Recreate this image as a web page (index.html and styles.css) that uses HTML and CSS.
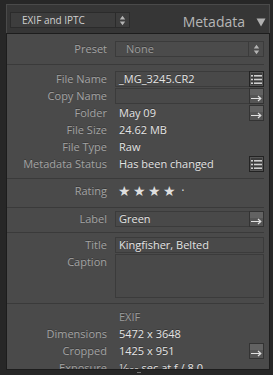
FILE: index.html
```html
<!DOCTYPE html>
<html>
<head>
<meta charset="utf-8">
<link rel="stylesheet" href="styles.css">
</head>
<body>
<div class="frame">
  <div class="head">
    <div class="select">
      <span class="select-text">EXIF and IPTC</span>
      <span class="stepper"><svg width="7" height="11" viewBox="0 0 7 11"><path d="M3.5 0.8 L6.2 4.6 L0.8 4.6 Z M0.8 6.4 L6.2 6.4 L3.5 10.2 Z" fill="#b4b4b4"/></svg></span>
    </div>
    <div class="title">Metadata</div>
    <svg class="tri" width="10" height="9" viewBox="0 0 10 9"><path d="M0.5 0.5 L9.5 0.5 L5 8.5 Z" fill="#b0b0b0"/></svg>
  </div>
  <div class="panel">
    <div class="sec sec-preset">
      <div class="row"><span class="lbl">Preset</span>
        <div class="field dd"><span class="val dim">None</span><span class="stepper2"><svg width="7" height="11" viewBox="0 0 7 11"><path d="M3.5 0.8 L6.2 4.6 L0.8 4.6 Z M0.8 6.4 L6.2 6.4 L3.5 10.2 Z" fill="#b4b4b4"/></svg></span></div>
      </div>
    </div>
    <div class="sec sec-file">
      <div class="row"><span class="lbl">File Name</span>
        <div class="field"><span class="val">_MG_3245.CR2</span><span class="btn btn-list"><svg width="11" height="9" viewBox="0 0 11 9"><g fill="#d0d0d0"><rect x="0" y="0" width="2" height="1.6"/><rect x="3" y="0" width="8" height="1.6"/><rect x="0" y="3.7" width="2" height="1.6"/><rect x="3" y="3.7" width="8" height="1.6"/><rect x="0" y="7.4" width="2" height="1.6"/><rect x="3" y="7.4" width="8" height="1.6"/></g></svg></span></div>
      </div>
      <div class="row"><span class="lbl">Copy Name</span>
        <div class="field"><span class="val"></span><span class="btn btn-arrow"><svg width="11" height="7" viewBox="0 0 11 7"><path d="M0 3.5 H9.5 M7 1 L9.8 3.5 L7 6" stroke="#e0e0e0" stroke-width="1.2" fill="none"/></svg></span></div>
      </div>
      <div class="row"><span class="lbl">Folder</span>
        <div class="plain"><span class="val">May 09</span><span class="btn btn-arrow"><svg width="11" height="7" viewBox="0 0 11 7"><path d="M0 3.5 H9.5 M7 1 L9.8 3.5 L7 6" stroke="#e0e0e0" stroke-width="1.2" fill="none"/></svg></span></div>
      </div>
      <div class="row"><span class="lbl">File Size</span>
        <div class="plain"><span class="val">24.62 MB</span></div>
      </div>
      <div class="row"><span class="lbl">File Type</span>
        <div class="plain"><span class="val">Raw</span></div>
      </div>
      <div class="row"><span class="lbl">Metadata Status</span>
        <div class="plain"><span class="val">Has been changed</span><span class="btn btn-list"><svg width="11" height="9" viewBox="0 0 11 9"><g fill="#d0d0d0"><rect x="0" y="0" width="2" height="1.6"/><rect x="3" y="0" width="8" height="1.6"/><rect x="0" y="3.7" width="2" height="1.6"/><rect x="3" y="3.7" width="8" height="1.6"/><rect x="0" y="7.4" width="2" height="1.6"/><rect x="3" y="7.4" width="8" height="1.6"/></g></svg></span></div>
      </div>
    </div>
    <div class="sec sec-rating">
      <div class="row"><span class="lbl">Rating</span>
        <div class="plain stars"><span>★</span><span>★</span><span>★</span><span>★</span><span class="dot">·</span></div>
      </div>
    </div>
    <div class="sec sec-label">
      <div class="row"><span class="lbl">Label</span>
        <div class="field"><span class="val">Green</span><span class="btn btn-arrow"><svg width="11" height="7" viewBox="0 0 11 7"><path d="M0 3.5 H9.5 M7 1 L9.8 3.5 L7 6" stroke="#e0e0e0" stroke-width="1.2" fill="none"/></svg></span></div>
      </div>
    </div>
    <div class="sec sec-title">
      <div class="row"><span class="lbl">Title</span>
        <div class="field"><span class="val">Kingfisher, Belted</span></div>
      </div>
      <div class="row row-caption"><span class="lbl">Caption</span>
        <div class="field area"></div>
      </div>
    </div>
    <div class="sec sec-exif">
      <div class="row"><span class="lbl"></span>
        <div class="plain"><span class="val dim">EXIF</span></div>
      </div>
      <div class="row"><span class="lbl">Dimensions</span>
        <div class="plain"><span class="val">5472 x 3648</span></div>
      </div>
      <div class="row"><span class="lbl">Cropped</span>
        <div class="plain"><span class="val">1425 x 951</span><span class="btn btn-arrow"><svg width="11" height="7" viewBox="0 0 11 7"><path d="M0 3.5 H9.5 M7 1 L9.8 3.5 L7 6" stroke="#e0e0e0" stroke-width="1.2" fill="none"/></svg></span></div>
      </div>
      <div class="row"><span class="lbl">Exposure</span>
        <div class="plain"><span class="val"><sup>1</sup>⁄<sub>500</sub> sec at f / 8.0</span></div>
      </div>
    </div>
  </div>
  <div class="grip"></div>
</div>
</body>
</html>
```

FILE: styles.css
```css
html, body {
  margin: 0;
  padding: 0;
}
body {
  background: #272727;
  width: 273px;
  height: 375px;
  overflow: hidden;
  font-family: "Open Sans", "DejaVu Sans", sans-serif;
  font-size: 11px;
}
.frame {
  padding: 4px 3px 0 6px;
  display: flex;
  flex-direction: column;
}
.head {
  border: 1px solid #4a4a4a;
  border-bottom: none;
  background: #363636;
  display: flex;
  align-items: flex-start;
  padding: 7px 0 0 3px;
  box-sizing: border-box;
  height: 29px;
}
.select {
  width: 120px;
  height: 16px;
  box-sizing: border-box;
  border: 1px solid #2b2b2b;
  background: #3d3d3d;
  display: flex;
  align-items: center;
}
.select-text {
  flex: 1;
  padding-left: 11px;
  font-size: 10px;
  color: #cfcfcf;
  line-height: 14px;
}
.stepper {
  width: 13px;
  height: 14px;
  border-left: 1px solid #2b2b2b;
  display: flex;
  align-items: center;
  justify-content: center;
}
.title {
  flex: 1;
  text-align: right;
  font-size: 14px;
  color: #b6b6b6;
  line-height: 16px;
  margin-top: 2px;
  padding-right: 11px;
}
.tri {
  margin: 6px 3px 0 0;
}
.panel {
  height: 337px;
  box-sizing: border-box;
  border: 1px solid #1d1d1d;
  background: #4a4a4a;
  overflow: hidden;
  padding-right: 5px;
}
.sec {
  border-bottom: 1px solid #3a3a3a;
  display: flex;
  flex-direction: column;
  gap: 1px;
}
.sec-preset { padding: 7px 0 7px; }
.sec-file { padding: 6px 0 6px; }
.sec-rating { padding: 4px 0 8px; }
.sec-label { padding: 3px 0 5px; }
.sec-title { padding: 4px 0 5px; }
.sec-exif { padding: 5px 0 0; border-bottom: none; }
.row {
  display: grid;
  grid-template-columns: 100px 1fr;
  column-gap: 8px;
  height: 16px;
  align-items: center;
}
.lbl {
  text-align: right;
  color: #a3a3a3;
  line-height: 16px;
  white-space: nowrap;
  text-shadow: 0 -1px 0 rgba(0,0,0,0.25);
}
.field {
  height: 16px;
  box-sizing: border-box;
  border: 1px solid #3b3b3b;
  background: #494949;
  display: flex;
  align-items: center;
}
.plain {
  height: 16px;
  display: flex;
  align-items: center;
}
.val {
  flex: 1;
  padding-left: 3px;
  color: #e4e4e4;
  line-height: 14px;
  white-space: nowrap;
  text-shadow: 0 -1px 0 rgba(0,0,0,0.3);
}
.plain .val { padding-left: 4px; }
.val.dim { color: #9c9c9c; }
.dd { background: #4b4b4b; }
.dd .val { padding-left: 10px; }
.stepper2 {
  width: 14px;
  height: 14px;
  border-left: 1px solid #3b3b3b;
  display: flex;
  align-items: center;
  justify-content: center;
}
.btn {
  width: 15px;
  height: 16px;
  box-sizing: border-box;
  display: flex;
  align-items: center;
  justify-content: center;
  flex: none;
}
.field .btn { margin-right: -1px; }
.btn-list {
  border: 1px solid #232323;
  background: #3c3c3c;
  box-shadow: inset 0 0 0 1px #555;
}
.btn-arrow {
  border: 1px solid #333;
  background: linear-gradient(#626262 0, #626262 45%, #555 45%, #555 100%);
}
.btn-arrow svg { margin-top: 4px; }
.stars {
  padding-left: 3px;
  color: #dedede;
  font-size: 14px;
  font-family: "DejaVu Sans", sans-serif;
  gap: 3px;
}
.stars span { width: 12px; text-align: center; }
.stars .dot { font-size: 12px; margin-left: -1px; }
.row-caption {
  height: 44px;
  align-items: start;
}
.area {
  height: 44px;
}
sup, sub {
  font-size: 8px;
  line-height: 0;
}
sup { vertical-align: 3px; }
sub { vertical-align: -1px; }
.grip {
  width: 4px;
  height: 1px;
  background: #777;
  margin: 2px 0 0 131px;
}
```
